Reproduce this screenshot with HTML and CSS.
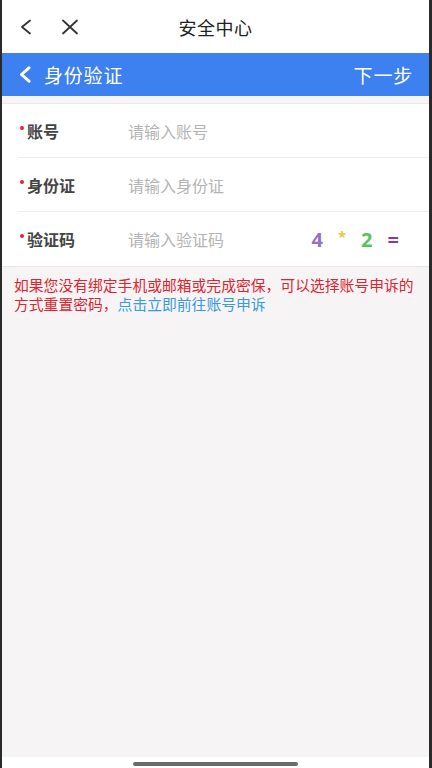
FILE: index.html
```html
<!DOCTYPE html>
<html lang="zh">
<head>
<meta charset="utf-8">
<title>安全中心</title>
<link rel="stylesheet" href="styles.css">
</head>
<body>
<div class="phone">
  <header class="topbar">
    <div class="top-icons">
      <svg class="ico" width="14" height="16" viewBox="0 0 14 16"><path d="M11 1.5 L3 8 L11 14.5" fill="none" stroke="#333" stroke-width="1.8" stroke-linecap="round" stroke-linejoin="round"/></svg>
      <svg class="ico x" width="18" height="16" viewBox="0 0 18 16"><path d="M2 1.5 L16 14.5 M16 1.5 L2 14.5" fill="none" stroke="#333" stroke-width="1.8" stroke-linecap="round"/></svg>
    </div>
    <div class="title">安全中心</div>
    <div></div>
  </header>
  <nav class="navbar">
    <div class="nav-left">
      <svg width="14" height="17" viewBox="0 0 14 17"><path d="M11 1.8 L3.5 8.5 L11 15.2" fill="none" stroke="#fff" stroke-width="3" stroke-linecap="round" stroke-linejoin="round"/></svg>
      <span class="nav-title">身份验证</span>
    </div>
    <span class="nav-next">下一步</span>
  </nav>
  <div class="spacer"></div>
  <section class="form">
    <div class="row">
      <label class="label"><span class="req"></span>账号</label>
      <span class="ph">请输入账号</span>
    </div>
    <div class="row">
      <label class="label"><span class="req"></span>身份证</label>
      <span class="ph">请输入身份证</span>
    </div>
    <div class="row last">
      <label class="label"><span class="req"></span>验证码</label>
      <span class="ph">请输入验证码</span>
      <div class="captcha">
        <span class="c1">4</span><span class="c2">*</span><span class="c3">2</span><span class="c4">=</span>
      </div>
    </div>
  </section>
  <div class="notice">
    <div class="line">如果您没有绑定手机或邮箱或完成密保，可以选择账号申诉的</div>
    <div class="line flexline"><span>方式重置密码，</span><span class="link">点击立即前往账号申诉</span></div>
  </div>
  <div class="fill"></div>
  <div class="homebar"><span class="indicator"></span></div>
</div>
</body>
</html>
```
FILE: styles.css
```css
html, body {
  margin: 0;
  padding: 0;
  background: #2a2a2a;
}
body {
  font-family: "Noto Sans CJK SC", "Noto Sans", sans-serif;
}
.phone {
  margin: 0 3px 0 2px;
  height: 768px;
  background: #f6f4f5;
  display: flex;
  flex-direction: column;
  overflow: hidden;
}
.topbar {
  height: 53px;
  background: #fff;
  display: grid;
  grid-template-columns: 1fr auto 1fr;
  align-items: center;
  flex: none;
}
.top-icons {
  display: flex;
  align-items: center;
  padding-left: 17px;
  gap: 28px;
}
.ico { display: block; }
.title {
  font-size: 18px;
  color: #222;
  letter-spacing: 0.5px;
}
.navbar {
  height: 43px;
  background: #3d80ef;
  display: flex;
  align-items: center;
  justify-content: space-between;
  padding: 0 16px 0 16px;
  color: #fff;
  flex: none;
}
.nav-left {
  display: flex;
  align-items: center;
  gap: 12px;
}
.nav-left svg { display: block; }
.nav-title, .nav-next {
  font-size: 19px;
  letter-spacing: 0.8px;
}
.spacer {
  height: 7px;
  border-bottom: 1px solid #ebe8ee;
  flex: none;
}
.form {
  background: #fff;
  flex: none;
  box-shadow: 0 1px 1px rgba(0,0,0,0.05);
}
.row {
  height: 54px;
  margin-left: 16px;
  display: flex;
  align-items: center;
  border-bottom: 1px solid #efedf0;
  box-sizing: border-box;
}
.row.last { border-bottom: none; }
.label {
  width: 110px;
  padding-left: 2px;
  font-size: 16px;
  font-weight: 700;
  color: #444;
  box-sizing: border-box;
  display: flex;
  align-items: center;
}
.req {
  width: 4px;
  height: 4px;
  border-radius: 50%;
  background: #e0242f;
  margin: 0 3px 6px 0;
  flex: none;
}
.ph {
  font-size: 16px;
  color: #b4b4b4;
  flex: 1;
}
.captcha {
  display: flex;
  align-items: center;
  margin-right: 30px;
  font-family: "Noto Sans", sans-serif;
  font-size: 20px;
  font-weight: 700;
}
.captcha span { margin-left: 15px; }
.c1 { color: #9571c9; }
.c2 { color: #e9c84c; font-size: 15px; position: relative; top: -3px; }
.c3 { color: #55c45a; }
.c4 { color: #8b3a9b; }
.notice {
  padding: 9px 12px 0 12px;
  font-size: 14.8px;
  color: #e0242f;
}
.line {
  height: 19px;
  line-height: 19px;
  white-space: nowrap;
}
.flexline {
  display: flex;
}
.link {
  color: #3a9ade;
}
.fill { flex: 1; }
.homebar {
  height: 11px;
  background: #fff;
  display: flex;
  justify-content: center;
  align-items: flex-end;
  flex: none;
}
.indicator {
  width: 165px;
  height: 4px;
  border-radius: 2px;
  background: #6a6a6a;
  margin-bottom: 2px;
}
```
